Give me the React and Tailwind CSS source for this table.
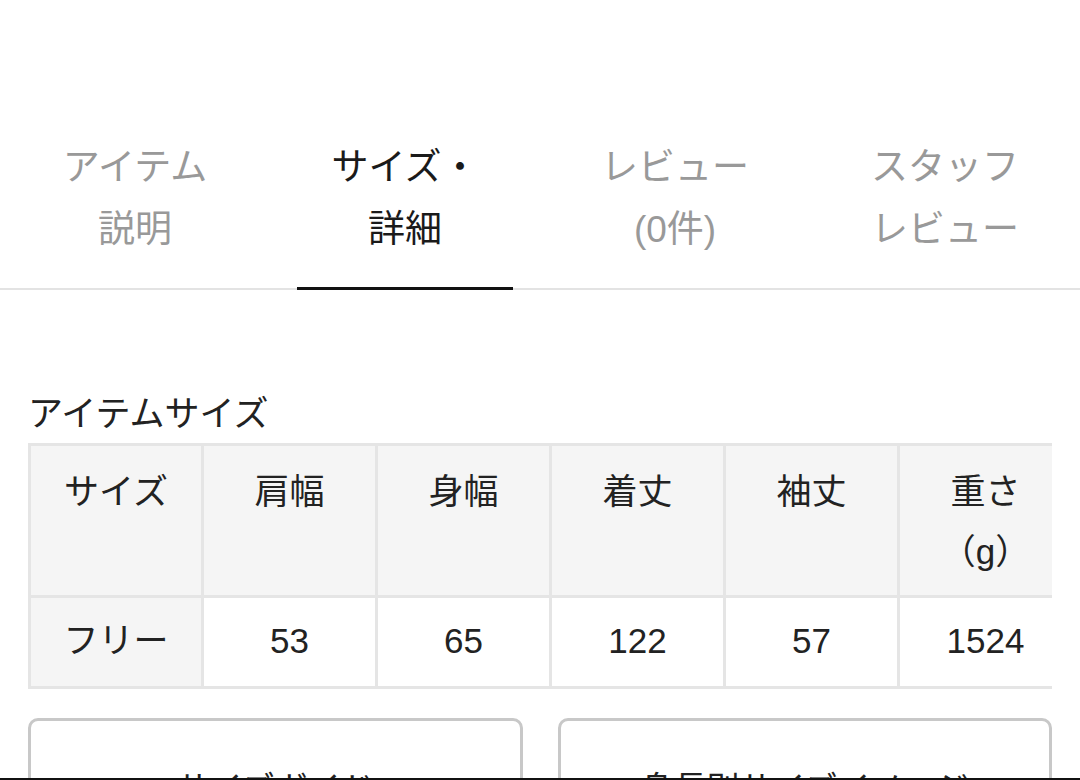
import React from "react";

const tabs = [
  { id: 1, lines: ["アイテム", "説明"] },
  { id: 2, lines: ["サイズ・", "詳細"], active: true },
  { id: 3, lines: ["レビュー", "(0件)"] },
  { id: 4, lines: ["スタッフ", "レビュー"] },
];

const heads = [["サイズ"], ["肩幅"], ["身幅"], ["着丈"], ["袖丈"], ["重さ", "（g）"]];
const values = ["フリー", "53", "65", "122", "57", "1524"];

const App = () => {
  return (
    <div
      className="h-[780px] overflow-hidden flex flex-col bg-white text-[#222]"
      style={{ fontFamily: '"Liberation Sans", "Noto Sans CJK JP", sans-serif' }}
    >
      <div className="flex-1 overflow-hidden">
        {/* tabs */}
        <div className="pt-[137px] border-b-2 border-[#e3e3e3] flex">
          {tabs.map((t) => (
            <div key={t.id} className="relative w-1/4 pb-[27px] text-center">
              <div
                className={`text-[37px] leading-[62px] ${
                  t.active ? "text-[#1a1a1a]" : "text-[#999]"
                }`}
              >
                {t.lines.map((l, i) => (
                  <div key={i}>{l}</div>
                ))}
              </div>
              {t.active && (
                <div className="absolute left-[27px] right-[27px] -bottom-[2px] h-[3px] bg-[#111]"></div>
              )}
            </div>
          ))}
        </div>

        {/* item size */}
        <div className="px-[28px] pt-[94px]">
          <h3 className="text-[35px] leading-[60px] -mb-[1px]">アイテムサイズ</h3>
          <div className="w-[1024px] overflow-hidden">
            <div className="grid grid-cols-[173px_repeat(5,174px)] w-[1046px] border-l-[3px] border-t-[3px] border-[#e5e5e5] text-[35px] leading-[60px]">
              {heads.map((h, i) => (
                <div
                  key={i}
                  className="h-[152px] pt-[16px] text-center bg-[#f5f5f5] border-r-[3px] border-b-[3px] border-[#e5e5e5]"
                >
                  {h.map((l, j) => (
                    <div key={j}>{l}</div>
                  ))}
                </div>
              ))}
              {values.map((v, i) => (
                <div
                  key={i}
                  className={`h-[91px] pt-[13px] text-center border-r-[3px] border-b-[3px] border-[#e5e5e5] ${
                    i === 0 ? "bg-[#f5f5f5]" : "bg-white"
                  }`}
                >
                  {v}
                </div>
              ))}
            </div>
          </div>

          {/* buttons */}
          <div className="mt-[29px] grid grid-cols-2 gap-[35px]">
            <button className="h-[120px] border-[3px] border-[#c8c8c8] rounded-[10px] text-[33px] pt-[22px] text-[#222]">
              サイズガイド
            </button>
            <button className="h-[120px] border-[3px] border-[#c8c8c8] rounded-[10px] text-[33px] pt-[22px] text-[#222]">
              身長別サイズイメージ
            </button>
          </div>
        </div>
      </div>
      <div className="h-[2px] bg-[#111]"></div>
    </div>
  );
};

export default App;
